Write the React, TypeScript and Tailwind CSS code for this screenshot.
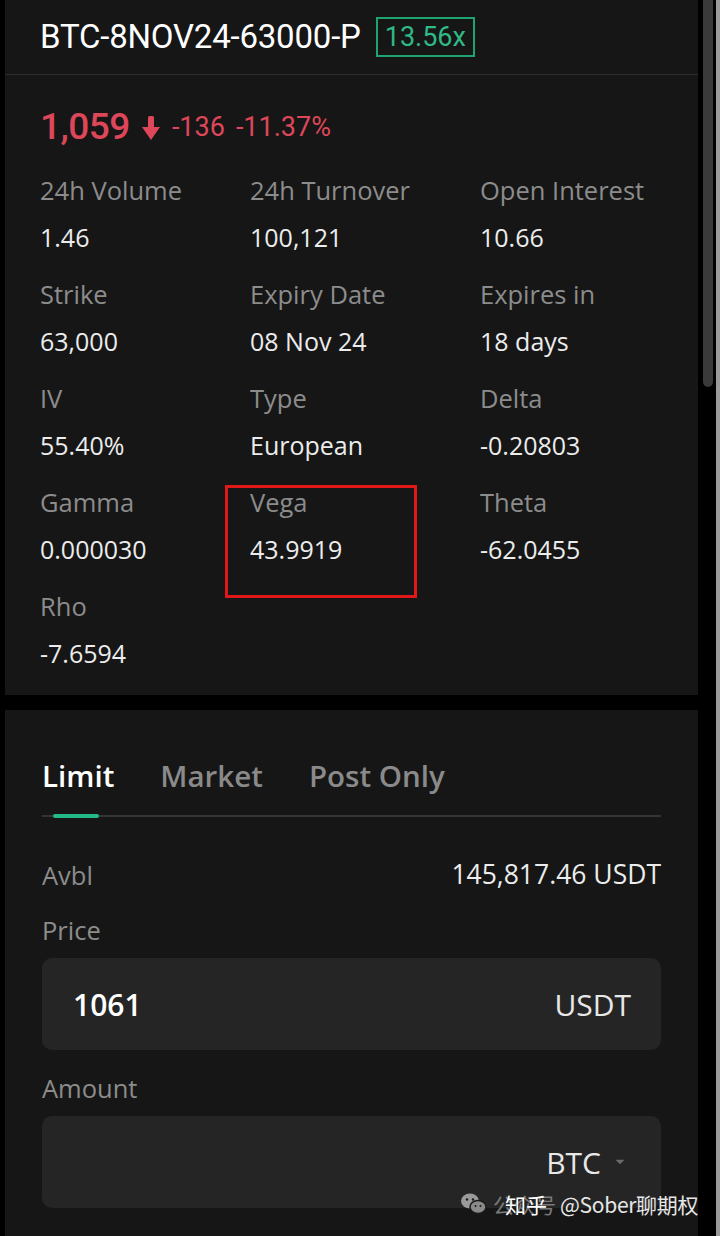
import { ChevronDown } from "lucide-react";

type Stat = { label: string; value: string };

const stats: Stat[] = [
  { label: "24h Volume", value: "1.46" },
  { label: "24h Turnover", value: "100,121" },
  { label: "Open Interest", value: "10.66" },
  { label: "Strike", value: "63,000" },
  { label: "Expiry Date", value: "08 Nov 24" },
  { label: "Expires in", value: "18 days" },
  { label: "IV", value: "55.40%" },
  { label: "Type", value: "European" },
  { label: "Delta", value: "-0.20803" },
  { label: "Gamma", value: "0.000030" },
  { label: "Vega", value: "43.9919" },
  { label: "Theta", value: "-62.0455" },
  { label: "Rho", value: "-7.6594" },
];

const sans = "font-['Open_Sans',sans-serif]";
const cond = "font-['Roboto',sans-serif]";

const StatCell = ({ item }: { item: Stat }) => {
  const marked = item.label === "Vega";
  return (
    <div className="relative">
      {marked && (
        <div className="absolute left-[-25px] top-[7px] w-[192px] h-[113px] border-[3px] border-[#e01818]" />
      )}
      <div className="h-[48px] flex items-center text-[25.5px] text-[#8c8c8c] whitespace-nowrap">
        {item.label}
      </div>
      <div className="h-[48px] flex items-center text-[25px] text-[#ececec] whitespace-nowrap">
        {item.value}
      </div>
    </div>
  );
};

const WeChat = () => (
  <svg width="28" height="24" viewBox="0 0 28 24">
    <ellipse cx="10" cy="9" rx="9" ry="7.5" fill="#9a9a9a" />
    <ellipse cx="18" cy="15" rx="8" ry="6.5" fill="#8a8a8a" stroke="#1b1b1b" strokeWidth="1.5" />
    <circle cx="7" cy="7.5" r="1.2" fill="#1b1b1b" />
    <circle cx="13" cy="7.5" r="1.2" fill="#1b1b1b" />
    <circle cx="15.5" cy="14" r="1" fill="#1b1b1b" />
    <circle cx="20.5" cy="14" r="1" fill="#1b1b1b" />
  </svg>
);

export default function App() {
  return (
    <div className={`relative w-[720px] h-[1236px] bg-black flex overflow-hidden ${sans}`}>
      <div className="ml-[5px] w-[693px] flex flex-col">
        {/* contract info */}
        <div className="bg-[#161616] h-[695px]">
          <div className="h-[75px] flex items-center pl-[35px] gap-[15px] border-b border-[#2c2c2c]">
            <span className={`${cond} text-[33px] text-white tracking-[-0.2px] whitespace-nowrap`}>
              BTC-8NOV24-63000-P
            </span>
            <span
              className={`${cond} text-[27px] text-[#2fb985] border-2 border-[#1fa36f] h-[40px] px-[7px] flex items-center`}
            >
              13.56x
            </span>
          </div>

          <div className="pt-[32px] pl-[35px] h-[72px] flex items-center gap-[11px] text-[#de4659]">
            <span className={`${cond} text-[37px] font-medium tracking-[-0.5px]`}>1,059</span>
            <svg width="20" height="26" viewBox="0 0 20 26" className="mt-[2px]">
              <rect x="7" y="1" width="6" height="14" rx="1.5" fill="#de4659" />
              <path d="M1 12 L19 12 L10 25 Z" fill="#de4659" />
            </svg>
            <span className={`${cond} text-[27px]`}>-136</span>
            <span className={`${cond} text-[27px]`}>-11.37%</span>
          </div>

          <div className="mt-[19px] pl-[35px] grid grid-cols-[210px_230px_1fr] gap-y-[8px]">
            {stats.map((s) => (
              <StatCell key={s.label} item={s} />
            ))}
          </div>
        </div>

        {/* order form */}
        <div className="mt-[15px] flex-1 bg-[#161616] px-[37px] pt-[46px]">
          <div className="flex items-center h-[40px] gap-[46px] text-[29.5px] font-semibold">
            <span className="text-white">Limit</span>
            <span className="text-[#8a8a8a]">Market</span>
            <span className="text-[#8a8a8a]">Post Only</span>
          </div>
          <div className="relative mt-[18px] h-[4px] flex items-center">
            <div className="w-full h-[2px] bg-[#343434]" />
            <div className="absolute left-[11px] top-0 w-[46px] h-[4px] rounded-full bg-[#23b989]" />
          </div>

          <div className="mt-[41px] h-[32px] flex items-center justify-between">
            <span className="text-[25.5px] text-[#8c8c8c]">Avbl</span>
            <span className="text-[26.5px] text-[#ececec]">145,817.46 USDT</span>
          </div>

          <div className="mt-[23px] h-[32px] flex items-center text-[25.5px] text-[#8c8c8c]">Price</div>
          <div className="mt-[12px] h-[92px] rounded-[10px] bg-[#252525] flex items-center justify-between pl-[31px] pr-[30px]">
            <span className="text-[30px] font-semibold text-white">1061</span>
            <span className="text-[30px] font-medium text-[#e8e8e8]">USDT</span>
          </div>

          <div className="mt-[22px] h-[32px] flex items-center text-[25.5px] text-[#8c8c8c]">Amount</div>
          <div className="mt-[12px] h-[92px] rounded-[10px] bg-[#252525] flex items-center justify-end pr-[32px] gap-[10px]">
            <span className="text-[30px] font-medium text-[#e8e8e8]">BTC</span>
            <ChevronDown size={18} strokeWidth={0} className="fill-[#6a6a6a]" />
          </div>
        </div>
      </div>

      {/* scrollbar */}
      <div className="ml-[5px] w-[10px] flex flex-col">
        <div className="h-[387px] w-[10px] rounded-b-full bg-[#3a3a3a]" />
      </div>
      <div className="ml-[3px] w-[4px] bg-[#9b9b9b]" />

      {/* watermark */}
      <div className="absolute left-[460px] top-[1188px] flex items-center whitespace-nowrap text-[21px] leading-[32px] font-['Noto_Sans_CJK_SC',sans-serif]">
        <WeChat />
        <span className="relative ml-[5px] text-[#7a7a7a]">
          公众号
          <span className="absolute left-[12px] top-0 text-white">知乎</span>
        </span>
        <span className="ml-[4px] text-[#e6e6e6] tracking-[-0.3px]">@Sober聊期权</span>
      </div>
    </div>
  );
}
